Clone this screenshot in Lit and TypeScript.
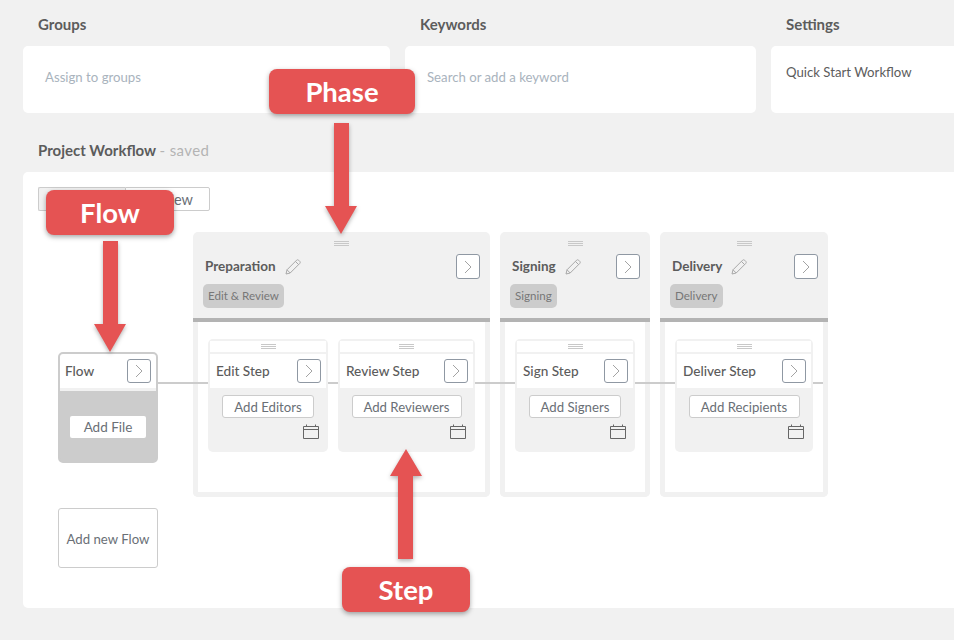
import { LitElement, html, css, svg } from "lit";
import { customElement } from "lit/decorators.js";

const handle = html`<svg class="handle" width="15" height="5" viewBox="0 0 15 5"><path d="M0 .5h15M0 2.5h15M0 4.5h15" stroke="#c8c8c8" fill="none"/></svg>`;
const chevron = html`<button class="chev"><svg width="8" height="14" viewBox="0 0 8 14"><path d="M1 1l6 6-6 6" stroke="#a3a3a3" fill="none"/></svg></button>`;
const pencil = html`<svg class="pencil" width="16" height="16" viewBox="0 0 16 16"><path d="M1 15l1-4.2L11.6 1.2c.6-.6 1.4-.6 2 0l1.2 1.2c.6.6.6 1.4 0 2L5.2 14zM2 10.8L5.2 14M10.4 2.4l3.2 3.2" stroke="#a8a8a8" fill="none"/></svg>`;
const calendar = html`<svg class="cal" width="16" height="15" viewBox="0 0 16 15"><path d="M.5 2.5h15v12H.5zM.5 5.5h15M3.5 .5v2M12.5 .5v2" stroke="#666" fill="none"/></svg>`;

const phases = [
  { name: "Preparation", tag: "Edit & Review", width: 297, steps: [
    { name: "Edit Step", add: "Add Editors", w: 120, b: 92 },
    { name: "Review Step", add: "Add Reviewers", w: 137, b: 110 },
  ] },
  { name: "Signing", tag: "Signing", width: 150, steps: [{ name: "Sign Step", add: "Add Signers", w: 120, b: 92 }] },
  { name: "Delivery", tag: "Delivery", width: 168, steps: [{ name: "Deliver Step", add: "Add Recipients", w: 138, b: 111 }] },
];

@customElement("app-root")
export class AppRoot extends LitElement {
  static styles = css`
    :host { display: block; width: 954px; height: 640px; overflow: hidden; position: relative; background: #f1f1f1;
      font-family: "Lato", "Open Sans", sans-serif; color: #5c5c5c; font-size: 13.2px; }
    * { box-sizing: border-box; }
    .page { padding-left: 23px; width: 1060px; }
    .top { display: grid; grid-template-columns: 367px 351px 260px; column-gap: 15px; }
    .heading { margin: 0; padding: 13px 0 0 15px; height: 46px; line-height: 22px; font-size: 15px; font-weight: 700; color: #5c5c5c; }
    .card { background: #fff; border-radius: 5px; height: 67px; padding: 21px 22px 0; line-height: 20px; color: #a9b3bd; }
    .card.plain { padding: 16px 15px 0; color: #5c5c5c; }
    .pw { margin: 0; padding-top: 26px; height: 59px; line-height: 22px; font-size: 15px; font-weight: 700; padding-left: 15px; }
    .pw span { font-weight: 400; color: #b4b4b4; letter-spacing: .4px; }
    .panel { background: #fff; border-radius: 5px; height: 436px; padding: 15px; }
    .toggle { display: flex; width: 172px; height: 24px; font-size: 14.5px; color: #6a6f76; }
    .toggle div { border: 1px solid #ccc; display: flex; align-items: center; justify-content: center; }
    .toggle div:first-child { width: 87px; background: #f1f1f1; border-radius: 2px 0 0 2px; border-right: 0; }
    .toggle div:last-child { width: 85px; border-radius: 0 2px 2px 0; }
    .board { position: relative; display: flex; margin-top: 21px; padding-left: 20px; }
    .line { position: absolute; left: 120px; top: 150px; width: 665px; height: 2px; background: #ccc; z-index: 1; }
    .flows { width: 100px; margin: 120px 35px 0 0; position: relative; z-index: 2; }
    .flow { height: 111px; border: 2px solid #ccc; border-radius: 5px; background: #ccc; overflow: hidden; }
    .flow .head { height: 34px; background: #fff; display: flex; align-items: center; justify-content: space-between; padding: 0 5px; font-size: 13.6px; font-weight: 500; }
    .flow .strip { height: 3px; background: #f1f1f1; }
    .flow .addfile { display: block; width: 76px; height: 22px; margin: 25px 0 0 10px; background: #fff; border: 0; border-radius: 2px; font: inherit; font-size: 13.5px; color: #6a6f76; padding: 0; text-align: center; }
    .newflow { margin-top: 45px; height: 60px; padding-top: 1px; border: 1px solid #ccc; border-radius: 3px; background: #fff; display: flex; align-items: center; justify-content: center; color: #6a6f76; }
    .phases { display: flex; column-gap: 10px; }
    .phase { height: 265px; display: flex; flex-direction: column; }
    .phase-head { height: 90px; background: #f1f1f1; border-bottom: 4px solid #b3b3b3; border-radius: 5px 5px 0 0; padding-top: 9px; display: flex; flex-direction: column; }
    .handle { display: block; align-self: center; flex: none; }
    .row { display: flex; align-items: center; margin-top: 8px; height: 25px; padding: 0 10px 0 12px; }
    .title { font-size: 13.5px; font-weight: 700; margin-top: -1px; }
    .pencil { margin: 0 0 0 9px; }
    .chev { margin-left: auto; width: 24px; height: 24px; border: 1px solid #8f98a3; border-radius: 3px; background: #fff; padding: 0; display: flex; align-items: center; justify-content: center; flex: none; }
    .phase-head .chev { height: 25px; }
    .tag { align-self: flex-start; margin: 5px 0 0 10px; height: 24px; line-height: 24px; padding: 0 5px; border-radius: 5px; background: #ccc; color: #777; font-size: 11.6px; }
    .phase-body { flex: 1; border: 5px solid #f1f1f1; border-top: 0; border-radius: 0 0 5px 5px; padding: 17px 10px 0; display: flex; column-gap: 10px; background: #fff; }
    .step { position: relative; z-index: 2; height: 113px; background: #f1f1f1; border-radius: 5px; padding: 2px; display: flex; flex-direction: column; align-items: stretch; }
    .step .top-h { height: 11px; background: #fff; display: flex; align-items: center; justify-content: center; }
    .step .head { margin-top: 2px; height: 34px; background: #fff; display: flex; align-items: center; padding: 0 5px 0 6px; font-size: 13.6px; font-weight: 500; }
    .add { align-self: center; margin-top: 7px; height: 23px; padding: 0; background: #fff; border: 1px solid #ccc; border-radius: 3px; color: #6a6f76; font: inherit; white-space: nowrap; }
    .cal { align-self: flex-end; margin: 6px 7px 0 0; }
    .overlay { position: absolute; left: 0; top: 0; z-index: 5; pointer-events: none; filter: drop-shadow(0 2px 2px rgba(0,0,0,.3)); }
    .badge { position: absolute; z-index: 6; height: 45px; display: flex; align-items: center; justify-content: center; background: #e55353; color: #fff; border-radius: 8px; font-size: 27.5px; font-weight: 700; box-shadow: 0 2px 5px rgba(0,0,0,.35); }
    .b-phase { left: 269px; top: 69px; width: 146px; }
    .b-flow { left: 46px; top: 190px; width: 128px; }
    .b-step { left: 342px; top: 567px; width: 128px; }
  `;

  render() {
    return html`
      <div class="page">
        <div class="top">
          <section><h2 class="heading">Groups</h2><div class="card">Assign to groups</div></section>
          <section><h2 class="heading">Keywords</h2><div class="card">Search or add a keyword</div></section>
          <section><h2 class="heading">Settings</h2><div class="card plain">Quick Start Workflow</div></section>
        </div>
        <h2 class="pw">Project Workflow <span>- saved</span></h2>
        <div class="panel">
          <div class="toggle"><div></div><div>Preview</div></div>
          <div class="board">
            <div class="line"></div>
            <div class="flows">
              <div class="flow">
                <div class="head"><span>Flow</span>${chevron}</div>
                <div class="strip"></div>
                <button class="addfile">Add File</button>
              </div>
              <div class="newflow">Add new Flow</div>
            </div>
            <div class="phases">
              ${phases.map((p) => html`
                <div class="phase" style="width:${p.width}px">
                  <div class="phase-head">
                    ${handle}
                    <div class="row"><span class="title">${p.name}</span>${pencil}${chevron}</div>
                    <span class="tag">${p.tag}</span>
                  </div>
                  <div class="phase-body">
                    ${p.steps.map((s) => html`
                      <div class="step" style="width:${s.w}px">
                        <div class="top-h">${handle}</div>
                        <div class="head"><span>${s.name}</span>${chevron}</div>
                        <button class="add" style="width:${s.b}px">${s.add}</button>
                        ${calendar}
                      </div>`)}
                  </div>
                </div>`)}
            </div>
          </div>
        </div>
      </div>
      <svg class="overlay" width="954" height="640" viewBox="0 0 954 640">
        ${svg`<polygon fill="#e55353" points="334,123 349,123 349,206 357,206 341,234 325,206 334,206"/>
        <polygon fill="#e55353" points="103,241 118,241 118,324 126,324 110,352 94,324 103,324"/>
        <polygon fill="#e55353" points="398,559 413,559 413,476 422,476 406,449 390,476 398,476"/>`}
      </svg>
      <div class="badge b-phase">Phase</div>
      <div class="badge b-flow">Flow</div>
      <div class="badge b-step">Step</div>
    `;
  }
}
